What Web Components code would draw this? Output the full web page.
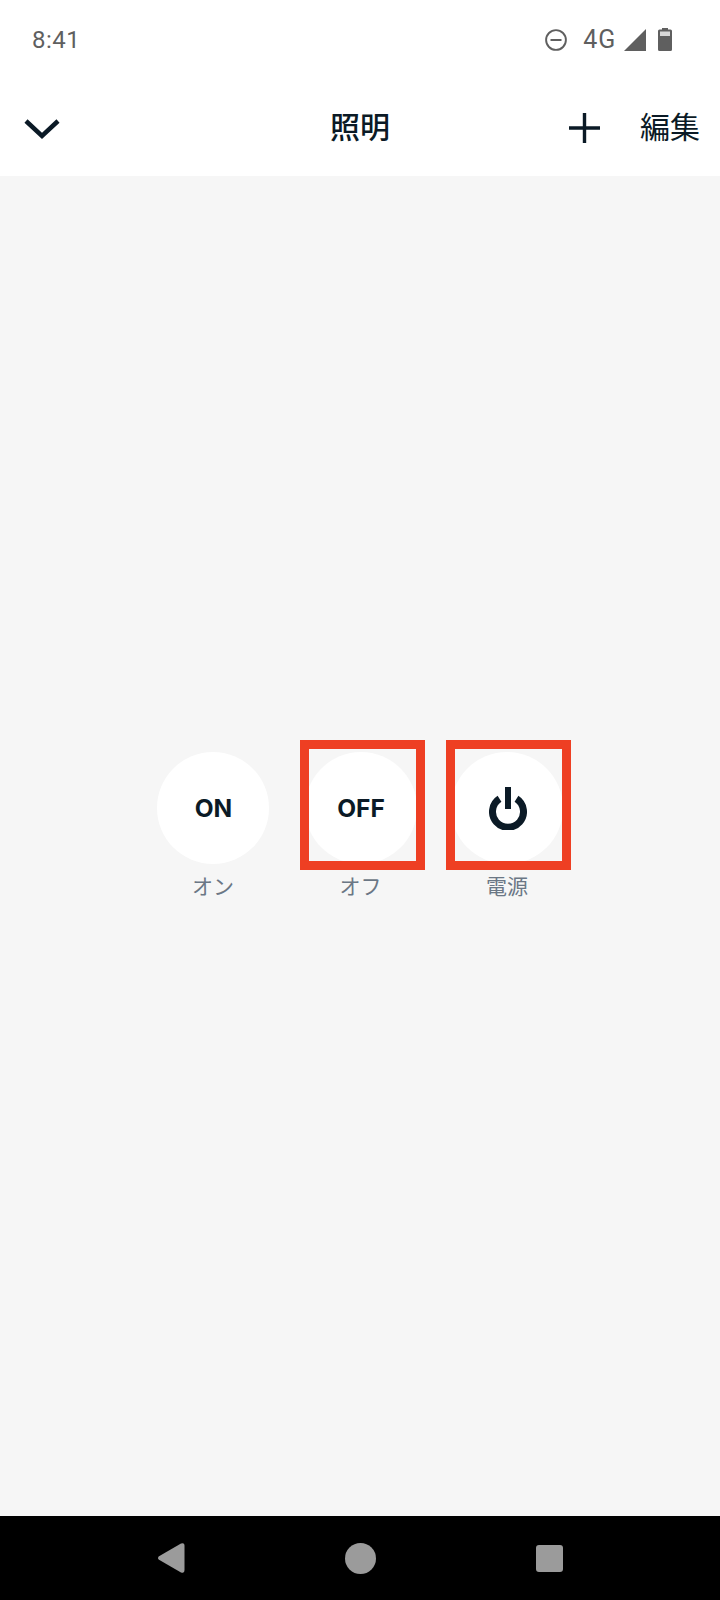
<!DOCTYPE html>
<html lang="ja">
<head>
<meta charset="utf-8">
<title>照明</title>
<style>
    html, body { margin: 0; padding: 0; height: 100%; }
    body { font-family: Roboto, "Noto Sans CJK JP", sans-serif; }
    app-screen { height: 1600px; }
    remote-button:first-of-type { margin-right: 1px; }
</style>
</head>
<body>
<app-screen>
    <status-bar slot="status"></status-bar>
    <top-bar slot="top" title="照明"></top-bar>
    <remote-button label="オン" text="ON"></remote-button>
    <remote-button label="オフ" text="OFF" marked></remote-button>
    <remote-button label="電源" power marked></remote-button>
    <nav-bar slot="nav"></nav-bar>
</app-screen>
<script>
class AppScreen extends HTMLElement {
    constructor(){
        super();
        this._shadowDom = this.attachShadow({mode:"open"})
    }
    connectedCallback() {
        this._shadowDom.innerHTML = `
        <style>
            :host{ display:flex; flex-direction:column; width:720px; background:#f6f6f6; }
            .content{ flex:1; display:flex; padding:576px 0 0 157px; box-sizing:border-box; gap:34.5px; }
        </style>
        <slot name="status"></slot>
        <slot name="top"></slot>
        <div class="content"><slot></slot></div>
        <slot name="nav"></slot>
        `
    }
}
class StatusBar extends HTMLElement {
    constructor(){
        super();
        this._shadowDom = this.attachShadow({mode:"open"})
    }
    connectedCallback() {
        this._shadowDom.innerHTML = `
        <style>
            :host{ display:flex; align-items:center; height:80px; background:#fff; padding:0 48px 1px 32px; box-sizing:border-box; color:#5f5f5f; font:24px Roboto, sans-serif; letter-spacing:.5px; }
            .time{ flex:1; }
            .icons{ display:flex; align-items:center; }
            svg{ display:block; }
            .net{ margin:0 8px 0 16px; font-size:25px; letter-spacing:.8px; }
        </style>
        <span class="time">8:41</span>
        <div class="icons">
            <svg width="22" height="22" viewBox="0 0 22 22"><circle cx="11" cy="11" r="9.9" fill="none" stroke="#5f5f5f" stroke-width="1.9"/><rect x="5.500" y="10" width="11" height="2" fill="#5f5f5f"/></svg>
            <span class="net">4G</span>
            <svg width="22" height="22" viewBox="0 0 22 22"><path d="M22 0V22H0Z" fill="#5f5f5f"/></svg>
            <svg style="margin-left:12px" width="14" height="23" viewBox="0 0 14 23"><path d="M4 1.500V0H10V1.500H12.500Q14 1.500 14 3V21.500Q14 23 12.500 23H1.500Q0 23 0 21.500V3Q0 1.500 1.500 1.500Z" fill="#5f5f5f"/><rect x="2" y="3.500" width="10" height="4.500" fill="#fff" opacity=".75"/></svg>
        </div>
        `
    }
}
class TopBar extends HTMLElement {
    constructor(){
        super();
        this._shadowDom = this.attachShadow({mode:"open"})
    }
    connectedCallback() {
        this._shadowDom.innerHTML = `
        <style>
            :host{ display:grid; grid-template-columns:1fr auto 1fr; align-items:center; height:96px; background:#fff; padding:0 22px; box-sizing:border-box; color:#0b1a26; font-family:Roboto, "Noto Sans CJK JP", sans-serif; }
            svg{ display:block; }
            .back{ margin:1px 0 0 2px; }
            h1{ margin:0; font-size:30px; font-weight:500; line-height:40px; }
            .right{ display:flex; justify-content:flex-end; align-items:center; gap:40px; margin-right:-2px; }
            .edit{ font-size:30px; line-height:40px; font-weight:400; }
        </style>
        <svg class="back" width="36" height="22" viewBox="0 0 36 22"><path d="M2 3L18 18L34 3" fill="none" stroke="#0b1a26" stroke-width="4.500"/></svg>
        <h1>${this.getAttribute('title')}</h1>
        <div class="right">
            <svg width="31" height="30" viewBox="0 0 31 30"><path d="M0 15H31M15.500 0V30" fill="none" stroke="#0b1a26" stroke-width="3.400"/></svg>
            <span class="edit">編集</span>
        </div>
        `
    }
}
class RemoteButton extends HTMLElement {
    constructor(){
        super();
        this._shadowDom = this.attachShadow({mode:"open"})
    }
    connectedCallback() {
        const face = this.hasAttribute('power')
            ? `<svg width="38" height="43" viewBox="0 0 38 43"><path d="M10.500 11.800A15.500 15.500 0 1 0 27.500 11.800" fill="none" stroke="#0b1a26" stroke-width="7"/><path d="M19 0V22" fill="none" stroke="#0b1a26" stroke-width="6"/></svg>`
            : `<span>${this.getAttribute('text')}</span>`
        this._shadowDom.innerHTML = `
        <style>
            :host{ display:block; position:relative; width:112px; font-family:Inter, "Noto Sans CJK JP", sans-serif; }
            .circle{ width:112px; height:112px; border-radius:50%; background:#fff; display:flex; align-items:center; justify-content:center; padding-left:1px; box-sizing:border-box; color:#0b1a26; font-size:24.500px; font-weight:700; }
            .label{ margin-top:9px; text-align:center; font-size:21px; line-height:28px; color:#6b7785; }
            .mark{ display:none; position:absolute; left:-5px; top:-12px; width:107px; height:112px; border:9px solid #ee3f23; }
            :host([marked]) .mark{ display:block; }
        </style>
        <div class="circle">${face}</div>
        <div class="label">${this.getAttribute('label')}</div>
        <div class="mark"></div>
        `
    }
}
class NavBar extends HTMLElement {
    constructor(){
        super();
        this._shadowDom = this.attachShadow({mode:"open"})
    }
    connectedCallback() {
        this._shadowDom.innerHTML = `
        <style>
            :host{ display:flex; align-items:center; justify-content:center; height:84px; background:#000; gap:160px; }
            svg{ display:block; }
        </style>
        <svg width="27" height="30" viewBox="0 0 27 30"><path d="M1 13.200L23 .6Q26.500 -1 26.500 3V27Q26.500 31 23 29.400L1 16.800Q-1 15 1 13.200Z" fill="#9b9b9b"/></svg>
        <svg width="31" height="31" viewBox="0 0 31 31"><circle cx="15.500" cy="15.500" r="15.500" fill="#9b9b9b"/></svg>
        <svg width="27" height="27" viewBox="0 0 27 27"><rect width="27" height="27" rx="3" fill="#9b9b9b"/></svg>
        `
    }
}
window.customElements.define("app-screen", AppScreen)
window.customElements.define("status-bar", StatusBar)
window.customElements.define("top-bar", TopBar)
window.customElements.define("remote-button", RemoteButton)
window.customElements.define("nav-bar", NavBar)
</script>
</body>
</html>
